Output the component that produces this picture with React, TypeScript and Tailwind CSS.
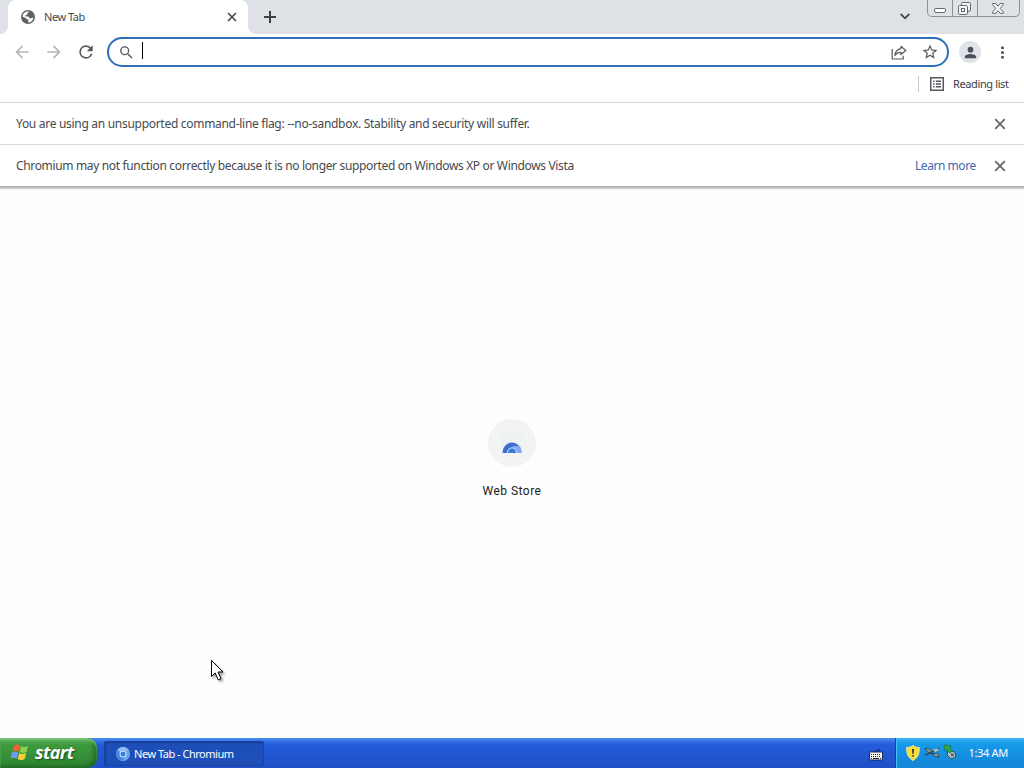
import type { ReactNode } from "react";
import clsx from "clsx";

const ui = "font-['Noto_Sans','DejaVu_Sans',sans-serif]";

function MIcon({ d, size = 16, className }: { d: string; size?: number; className?: string }) {
  return (
    <svg viewBox="0 0 24 24" width={size} height={size} fill="currentColor" className={clsx("shrink-0", className)}>
      <path d={d} />
    </svg>
  );
}

const paths = {
  back: "M20 11H7.8l5.6-5.6L12 4l-8 8 8 8 1.4-1.4L7.8 13H20z",
  forward: "M4 11h12.2l-5.6-5.6L12 4l8 8-8 8-1.4-1.4 5.6-5.6H4z",
  reload:
    "M17.65 6.35A7.96 7.96 0 0 0 12 4a8 8 0 1 0 7.73 10h-2.08A6 6 0 1 1 12 6c1.66 0 3.14.69 4.22 1.78L13 11h7V4z",
  search:
    "M15.5 14h-.79l-.28-.27A6.47 6.47 0 0 0 16 9.5 6.5 6.5 0 1 0 9.5 16c1.61 0 3.09-.59 4.23-1.57l.27.28v.79l5 4.99L20.49 19zm-6 0a4.5 4.5 0 1 1 0-9 4.5 4.5 0 0 1 0 9z",
  star: "M22 9.24l-7.19-.62L12 2 9.19 8.63 2 9.24l5.46 4.73L5.82 21 12 17.27 18.18 21l-1.63-7.03zM12 15.4l-3.76 2.27 1-4.28-3.32-2.88 4.38-.38L12 6.1l1.71 4.04 4.38.38-3.32 2.88 1 4.28z",
  person: "M12 12a4 4 0 1 0 0-8 4 4 0 0 0 0 8zm0 2c-2.67 0-8 1.34-8 4v2h16v-2c0-2.66-5.33-4-8-4z",
  dots: "M12 8a2 2 0 1 0 0-4 2 2 0 0 0 0 4zm0 6a2 2 0 1 0 0-4 2 2 0 0 0 0 4zm0 6a2 2 0 1 0 0-4 2 2 0 0 0 0 4z",
};

function Cross({ size, width }: { size: number; width: number }) {
  return (
    <svg width={size} height={size} viewBox="0 0 10 10" fill="none" stroke="currentColor" strokeWidth={width}>
      <path d="M1 1l8 8M9 1l-8 8" />
    </svg>
  );
}

function Globe() {
  return (
    <svg width="14" height="14" viewBox="0 0 14 14" className="shrink-0">
      <circle cx="7" cy="7" r="7" fill="#5f6368" />
      <path d="M8.300 1.600c-.3 1-1.600 1-1.900 1.700-.3.8.2 1.500-.7 1.800-.9.2-1.400.2-1.500 1 0 .6 1.900.4 3.200.6 1 .2.800 1.600 1.600 1.700 1 .2 1.400-.6 3.300-.6a5.500 5.500 0 0 1-5.300 4.700c-.2-1 .8-1.800.5-2.600-.3-.9-1.800-.6-2.400-1.500C4.600 7.700 3 7.200 1.500 6.800A5.500 5.500 0 0 1 8.300 1.600z" fill="#fff" />
    </svg>
  );
}

function WindowButtons() {
  return (
    <div className="flex h-[17px] w-[93px] rounded-b-[5px] border border-t-0 border-[#8d9197] text-[#666a70]">
      <div className="flex w-[25px] items-start justify-center border-r border-[#8d9197] pt-2">
        <svg width="12" height="5" fill="#fff" stroke="currentColor">
          <rect x=".5" y=".5" width="11" height="4" rx="1.500" />
        </svg>
      </div>
      <div className="flex w-[25px] items-start justify-center border-r border-[#8d9197] pt-0.5 pr-px">
        <svg width="13" height="13" fill="#f1f3f5" stroke="currentColor">
          <rect x="3.500" y=".5" width="9" height="8.500" rx="1" />
          <rect x=".5" y="3.500" width="9" height="9" rx="1" />
          <rect x="3.500" y="6.500" width="3" height="3" />
        </svg>
      </div>
      <div className="flex flex-1 items-start justify-center pt-[3px] pr-px">
        <svg width="12" height="11" fill="#f4f5f7" stroke="currentColor">
          <path d="M.7.5h3.100L6 3.200 8.200.5h3.100v1.300L8.200 5.400l3.100 3.500v1.500H8.200L6 7.700 3.800 10.400H.7V8.900l3.100-3.500L.7 1.800z" />
        </svg>
      </div>
    </div>
  );
}

function TabStrip() {
  return (
    <div className="flex h-[34px] bg-[#dee1e6]">
      <div className="w-2 bg-white">
        <div className="h-full rounded-br-lg bg-[#dee1e6]" />
      </div>
      <div className="bg-[#dee1e6]">
        <div className="flex h-full w-60 items-center rounded-t-lg bg-white pr-[11px] pl-[13px] text-[#45494d]">
          <Globe />
          <span className="mb-px ml-[9px] flex-1 text-[11px] leading-none tracking-[-0.45px]">New Tab</span>
          <Cross size={10} width={1.7} />
        </div>
      </div>
      <div className="flex-1 bg-white">
        <div className="flex h-full rounded-bl-lg bg-[#dee1e6]">
          <svg width="12" height="12" className="mt-[11px] ml-4" stroke="#3c4043" strokeWidth="2">
            <path d="M6 0v12M0 6h12" />
          </svg>
          <svg width="10" height="7" className="mt-[13px] ml-auto" fill="none" stroke="#45494d" strokeWidth="1.800">
            <path d="M.7 1L5 5.300 9.300 1" />
          </svg>
          <div className="mr-1 ml-[17px]">
            <WindowButtons />
          </div>
        </div>
      </div>
    </div>
  );
}

function Toolbar() {
  return (
    <div className="flex h-9 items-center pl-3 text-[#55585c]">
      <MIcon d={paths.back} size={20} className="text-[#b4b6b9]" />
      <MIcon d={paths.forward} size={20} className="ml-3 text-[#b4b6b9]" />
      <MIcon d={paths.reload} size={20} className="ml-3" />
      <div className="ml-[11px] flex h-[30px] w-[842px] items-center rounded-full border-2 border-[#2f6fb9] pr-[8px] pl-[9px]">
        <MIcon d={paths.search} size={17} />
        <div className="mb-[3px] ml-[7px] h-[17px] w-px bg-black" />
        <svg width="16" height="15" viewBox="0 0 16 15" className="ml-auto" fill="none" stroke="currentColor" strokeWidth="1.200">
          <path d="M1.200 4v10h11v-3.300" />
          <path d="M10 1.300l4.800 4.200L10 9.500V7.300C7 7.200 5.200 8.300 3.900 10.500 4.300 6.900 6.200 4.200 10 3.600z" strokeLinejoin="round" />
        </svg>
        <MIcon d={paths.star} size={18} className="ml-[14px]" />
      </div>
      <div className="ml-[10px] flex size-[22px] items-center justify-center rounded-full bg-[#e0e3e8] text-[#4b5058]">
        <MIcon d={paths.person} size={17} />
      </div>
      <MIcon d={paths.dots} size={19} className="ml-3" />
    </div>
  );
}

function BookmarksBar() {
  return (
    <div className="flex h-8 items-start justify-end pr-[15px] text-[#3c4043]">
      <div className="mt-[6px] h-4 w-px bg-[#c6c9cd]" />
      <svg width="14" height="14" className="mt-[7px] ml-[11px]" fill="none" stroke="#55585c" strokeWidth="1.500">
        <rect x=".75" y=".75" width="12.500" height="12.500" />
        <path d="M3 4.200h1.500M3 7h1.500M3 9.800h1.500M5.800 4.200H11M5.800 7H11M5.800 9.800H11" />
      </svg>
      <span className="mt-[6px] ml-[9px] w-[56px] text-[11px] leading-[15px] tracking-[-0.38px] whitespace-nowrap">
        Reading list
      </span>
    </div>
  );
}

function InfoBar({ children, link }: { children: ReactNode; link?: string }) {
  return (
    <div className="flex h-[42px] items-center border-t border-[#d5d8dc] pr-[18px] pl-4 text-xs text-[#46494d]">
      <span className={clsx("flex-1 whitespace-nowrap", link ? "tracking-[-0.345px]" : "tracking-[-0.295px]")}>
        {children}
      </span>
      {link && <span className="mr-[18px] w-[61px] tracking-[-0.45px] whitespace-nowrap text-[#4068b0]">{link}</span>}
      <div className="text-[#66696d]">
        <Cross size={12} width={1.500} />
      </div>
    </div>
  );
}

function ShortcutTile() {
  return (
    <div className="flex w-28 flex-col items-center">
      <div className="flex size-12 items-center justify-center rounded-full bg-[#f2f4f4]">
        <svg width="24" height="24" viewBox="0 0 24 24">
          <rect x="2" y="2" width="20" height="20" rx="2" fill="#eef1f1" />
          <path d="M2.500 22a9.500 10.500 0 0 1 19 0z" fill="#3c6fd0" />
          <path d="M13 15h6.800c1.200 2 1.700 4.500 1.700 7H12z" fill="#80aaf0" />
          <path d="M6.800 22a5.200 5.800 0 0 1 10.400 0z" fill="#b9d2f8" />
          <path d="M8 22a4 4.500 0 0 1 8 0z" fill="#3d78dc" />
        </svg>
      </div>
      <span className="mt-[15px] font-[Roboto,sans-serif] text-xs leading-[18px] tracking-[0.47px] text-[#202124]">
        Web Store
      </span>
    </div>
  );
}

function StartButton() {
  return (
    <div className="flex h-full w-[97px] items-center rounded-r-[10px] bg-linear-to-b from-[#5cae5a] via-[#3c9a3d] via-25% to-[#2f8431] pl-[10px] shadow-[inset_0_2px_2px_#7cc47c,inset_-3px_-2px_4px_#1f6623]">
      <svg width="20" height="19" viewBox="0 0 20 19" className="mb-0.5 shrink-0">
        <path d="M4 2.500Q7.500.500 10 2.500L8.500 8.500Q5.500 6.800 2.300 8.500z" fill="#ef6236" />
        <path d="M11 3Q14.500 5 18 3l-1.500 6Q13 11 9.500 9z" fill="#8fd14b" />
        <path d="M2 9.500Q5.200 7.800 8.200 9.500L6.700 15.500Q3.500 14 .5 15.500z" fill="#6d9cf4" />
        <path d="M9.200 10Q12.500 12 16.200 10l-1.500 6Q11.200 18 7.700 16z" fill="#fbcf3c" />
      </svg>
      <span className="mb-0.5 ml-[5px] font-['Open_Sans','Noto_Sans',sans-serif] text-[18px] leading-none font-bold tracking-[-0.6px] text-white italic [text-shadow:1px_1px_2px_#174d18]">
        start
      </span>
    </div>
  );
}

function Taskbar() {
  return (
    <div className="flex h-[30px] bg-linear-to-b from-[#4b8df0] via-[#245cdc] via-20% to-[#1f50c6] text-white">
      <StartButton />
      <div className="mt-[3px] ml-[7px] flex h-[25px] w-40 items-center rounded-xs border border-[#1a419c] bg-[#1e4fb9] pl-[11px] shadow-[inset_1px_1px_2px_#163a8c]">
        <svg width="14" height="14" viewBox="0 0 14 14">
          <circle cx="7" cy="7" r="7" fill="#6ea6ee" />
          <path d="M1 3.500A7 7 0 0 0 6 13.900L8.800 9z" fill="#4584df" />
          <path d="M1 3.500A7 7 0 0 1 13 3.500H7z" fill="#91bdf5" />
          <circle cx="7" cy="7" r="3.500" fill="#d8e8fc" />
          <circle cx="7" cy="7" r="2.500" fill="#397bdc" />
        </svg>
        <span className="ml-1 text-[11px] leading-none tracking-[-0.48px] whitespace-nowrap">New Tab - Chromium</span>
      </div>
      <svg width="14" height="14" viewBox="0 0 14 14" className="mt-[9px] ml-auto">
        <path d="M6.500 5V3.500h4V2" stroke="#173371" fill="none" />
        <rect x=".5" y="5" width="13" height="8" rx="1" fill="#f4f4ee" stroke="#16265c" />
        <path d="M2 7.500h10M2 9.500h10" stroke="#222" strokeDasharray="1 1" />
        <path d="M2 11.500h1M4 11.500h6M11 11.500h1" stroke="#222" />
      </svg>
      <div className="ml-3 flex h-full w-[129px] items-center border-l border-[#16409e] bg-linear-to-b from-[#3ab1f5] via-[#169ae9] via-20% to-[#1484d6] pr-4 pl-[10px] shadow-[inset_1px_0_1px_#4cc3fa]">
        <svg width="14" height="16" viewBox="0 0 14 16">
          <path d="M7 .5C9 2 11 2.500 13.300 2.500c.2 6-1.300 10-6.300 13C2 12.500.5 8.500.7 2.500 3 2.500 5 2 7 .5z" fill="#f8dc2f" stroke="#eee6ad" />
          <path d="M6 4h2l-.4 5H6.400zM6.200 10h1.600v1.600H6.200z" fill="#26324a" />
        </svg>
        <svg width="16" height="14" viewBox="0 0 16 14" className="ml-1">
          <path d="M1 3l7 3 7-4M1 9l6-2 8 4" stroke="#344b55" strokeWidth="1.500" fill="none" />
          <path d="M1 2l5 1 2 3-4 .5zM9 8l5-1 1 3-4 1z" fill="#87969b" stroke="#26424e" strokeWidth=".7" />
          <path d="M9 3.500l5-1 .5 2-4 1.500z" fill="#b3c3bf" />
        </svg>
        <svg width="15" height="16" viewBox="0 0 15 16" className="mb-0.5 ml-[3px]">
          <path d="M5 6l7 2 1 5-5 2-4-4z" fill="#aab9c2" stroke="#31505d" />
          <path d="M8 9l3 1v2l-3 .5z" fill="#536e7b" />
          <path d="M1 1l7 1-1.500 2L9 7 6.500 9 4 5.500 2 7z" fill="#33af3d" stroke="#147329" strokeWidth=".7" />
        </svg>
        <span className="mb-px ml-auto text-[11px] leading-none tracking-[-0.3px] whitespace-nowrap">1:34 AM</span>
      </div>
    </div>
  );
}

function Cursor() {
  return (
    <svg
      width="16"
      height="24"
      viewBox="0 0 16 24"
      className="absolute top-[659px] left-[211px] drop-shadow-[2px_2px_1px_rgba(0,0,0,0.35)]"
    >
      <path d="M.5 1.500v16l3.700-3.500 3 7 2.800-1.300-3-6.700h5z" fill="#fff" stroke="#000" />
    </svg>
  );
}

export default function App() {
  return (
    <div className={clsx("relative flex h-[768px] w-[1024px] flex-col overflow-hidden bg-white", ui)}>
      <TabStrip />
      <Toolbar />
      <BookmarksBar />
      <InfoBar>You are using an unsupported command-line flag: --no-sandbox. Stability and security will suffer.</InfoBar>
      <InfoBar link="Learn more">
        Chromium may not function correctly because it is no longer supported on Windows XP or Windows Vista
      </InfoBar>
      <div className="h-1 bg-linear-to-b from-[#aaacae] via-[#b9bbbd] via-40% to-white" />
      <main className="flex flex-1 justify-center bg-[#fefefe] pt-[229px]">
        <ShortcutTile />
      </main>
      <Taskbar />
      <Cursor />
    </div>
  );
}
